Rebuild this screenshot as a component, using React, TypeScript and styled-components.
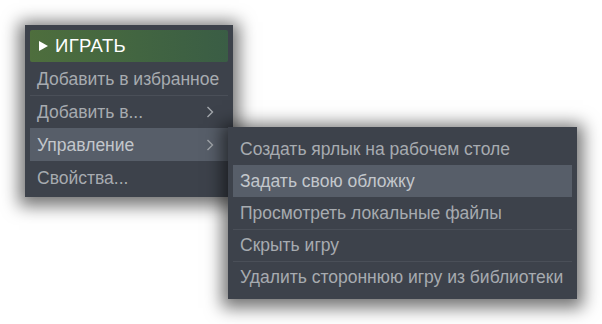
import styled, { createGlobalStyle } from 'styled-components';

const GlobalStyle = createGlobalStyle`
  html, body {
    margin: 0;
    padding: 0;
    background: #ffffff;
  }
  body {
    font-family: 'Liberation Sans', Arial, sans-serif;
  }
`;

const Page = styled.div`
  width: 602px;
  height: 324px;
  padding: 25px 0 0 25px;
  box-sizing: border-box;
  overflow: hidden;
`;

const Panel = styled.div<{ $width: number }>`
  width: ${(p) => p.$width}px;
  box-sizing: border-box;
  padding: 5px 5px 3px;
  background: #3d424b;
  box-shadow: 0 3px 16px 6px rgba(0, 0, 0, 0.55);
  display: flex;
  flex-direction: column;
`;

const PlayButton = styled.div`
  height: 32px;
  display: flex;
  align-items: center;
  gap: 7px;
  padding-left: 9px;
  border-radius: 2px;
  background: linear-gradient(90deg, #4e6e3d 0%, #426541 55%, #3a5d45 100%);
  color: #ffffff;
  font-size: 18.5px;
  letter-spacing: 0.4px;
`;

const Item = styled.div<{ $active?: boolean; $line?: boolean; $h?: number }>`
  position: relative;
  height: ${(p) => p.$h ?? 33}px;
  display: flex;
  align-items: center;
  justify-content: space-between;
  padding: 0 14px 0 7px;
  box-sizing: border-box;
  font-size: 17.5px;
  color: ${(p) => (p.$active ? '#c3c7cc' : '#a7abb0')};
  background: ${(p) => (p.$active ? '#575e69' : 'transparent')};
  border-top: 1px solid ${(p) => (p.$line ? '#4a4f58' : 'transparent')};
  white-space: nowrap;
`;

const SubMenu = styled(Panel)`
  position: absolute;
  left: 100%;
  top: -2px;
  z-index: 2;
  padding: 6px 5px;
`;

function Chevron() {
  return (
    <svg width="8" height="12" viewBox="0 0 8 12">
      <polyline
        points="1.5,1 6.5,6 1.5,11"
        fill="none"
        stroke="#a3a7ac"
        strokeWidth="1.4"
      />
    </svg>
  );
}

function PlayIcon() {
  return (
    <svg width="9" height="10" viewBox="0 0 9 10">
      <polygon points="0,0 9,5 0,10" fill="#ffffff" />
    </svg>
  );
}

const subItems = [
  'Создать ярлык на рабочем столе',
  'Задать свою обложку',
  'Просмотреть локальные файлы',
  'Скрыть игру',
  'Удалить стороннюю игру из библиотеки',
];

export default function App() {
  const hovered = 1;

  return (
    <Page>
      <GlobalStyle />
      <Panel $width={208}>
        <PlayButton>
          <PlayIcon />
          ИГРАТЬ
        </PlayButton>
        <Item>Добавить в избранное</Item>
        <Item $line>
          Добавить в...
          <Chevron />
        </Item>
        <Item $active>
          Управление
          <Chevron />
          <SubMenu $width={349}>
            {subItems.map((label, i) => (
              <Item
                key={label}
                $h={32}
                $active={i === hovered}
                $line={i > 0 && i !== hovered && i - 1 !== hovered}
              >
                {label}
              </Item>
            ))}
          </SubMenu>
        </Item>
        <Item>Свойства...</Item>
      </Panel>
    </Page>
  );
}
